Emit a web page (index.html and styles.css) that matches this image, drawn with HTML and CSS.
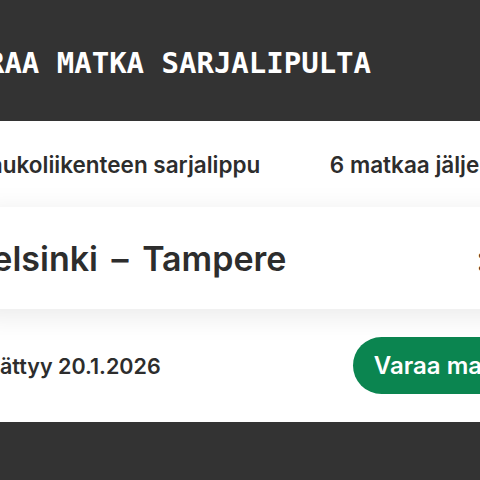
FILE: index.html
```html
<!DOCTYPE html>
<html lang="fi">
<head>
    <meta charset="UTF-8">
    <meta name="viewport" content="width=device-width, initial-scale=1.0">
    <title>Varaa matka sarjalipulta</title>
    <link rel="stylesheet" href="styles.css">
</head>
<body>
    <div class="page">
        <header class="pageHeader">
            <h1>VARAA MATKA SARJALIPULTA</h1>
        </header>
        <div class="ticket">
            <div class="ticketRow ticketType">
                <span>Kaukoliikenteen sarjalippu</span>
                <span class="tripsLeft">6 matkaa jäljellä</span>
            </div>
            <div class="ticketRow routeCard">
                <span class="route">Helsinki <span class="dash">–</span> Tampere</span>
                <span class="duration">:</span>
            </div>
            <div class="ticketRow ticketFooter">
                <span>Päättyy 20.1.2026</span>
                <button class="bookButton">Varaa matka</button>
            </div>
        </div>
    </div>
</body>
</html>
```

FILE: styles.css
```css
* {
    box-sizing: border-box;
}

body {
    margin: 0;
    background-color: #333333;
    overflow: hidden;
    font-family: Inter, "Noto Sans", sans-serif;
    color: #2d2d2d;
}

.page {
    width: 600px;
    margin-left: -26px;
}

.pageHeader {
    height: 121px;
    display: flex;
    align-items: center;
    padding-top: 4px;
    background-color: #333333;
}

.pageHeader h1 {
    margin: 0 0 0 -22px;
    font-family: "DejaVu Sans Mono", "Liberation Mono", monospace;
    font-size: 29px;
    font-weight: bold;
    color: #ffffff;
}

.ticket {
    background-color: #ffffff;
}

.ticketRow {
    display: flex;
    justify-content: space-between;
    align-items: center;
}

.ticketType {
    height: 86px;
    padding-right: 70px;
    font-size: 22.5px;
    font-weight: 600;
}

.routeCard {
    position: relative;
    height: 102px;
    background-color: #ffffff;
    box-shadow: 0 6px 28px rgba(0, 0, 0, 0.09);
    font-size: 34px;
    font-weight: 600;
}

.route {
    margin-left: -7px;
}

.route .dash {
    margin: 0 5px;
}

.duration {
    margin-right: 87px;
}

.ticketFooter {
    height: 113px;
    padding-right: 35px;
    font-size: 21.5px;
    font-weight: 600;
}

.bookButton {
    height: 57px;
    padding: 0 21px;
    border: none;
    border-radius: 29px;
    background-color: #0b8550;
    color: #ffffff;
    font-family: inherit;
    font-size: 24px;
    font-weight: 600;
}
```
